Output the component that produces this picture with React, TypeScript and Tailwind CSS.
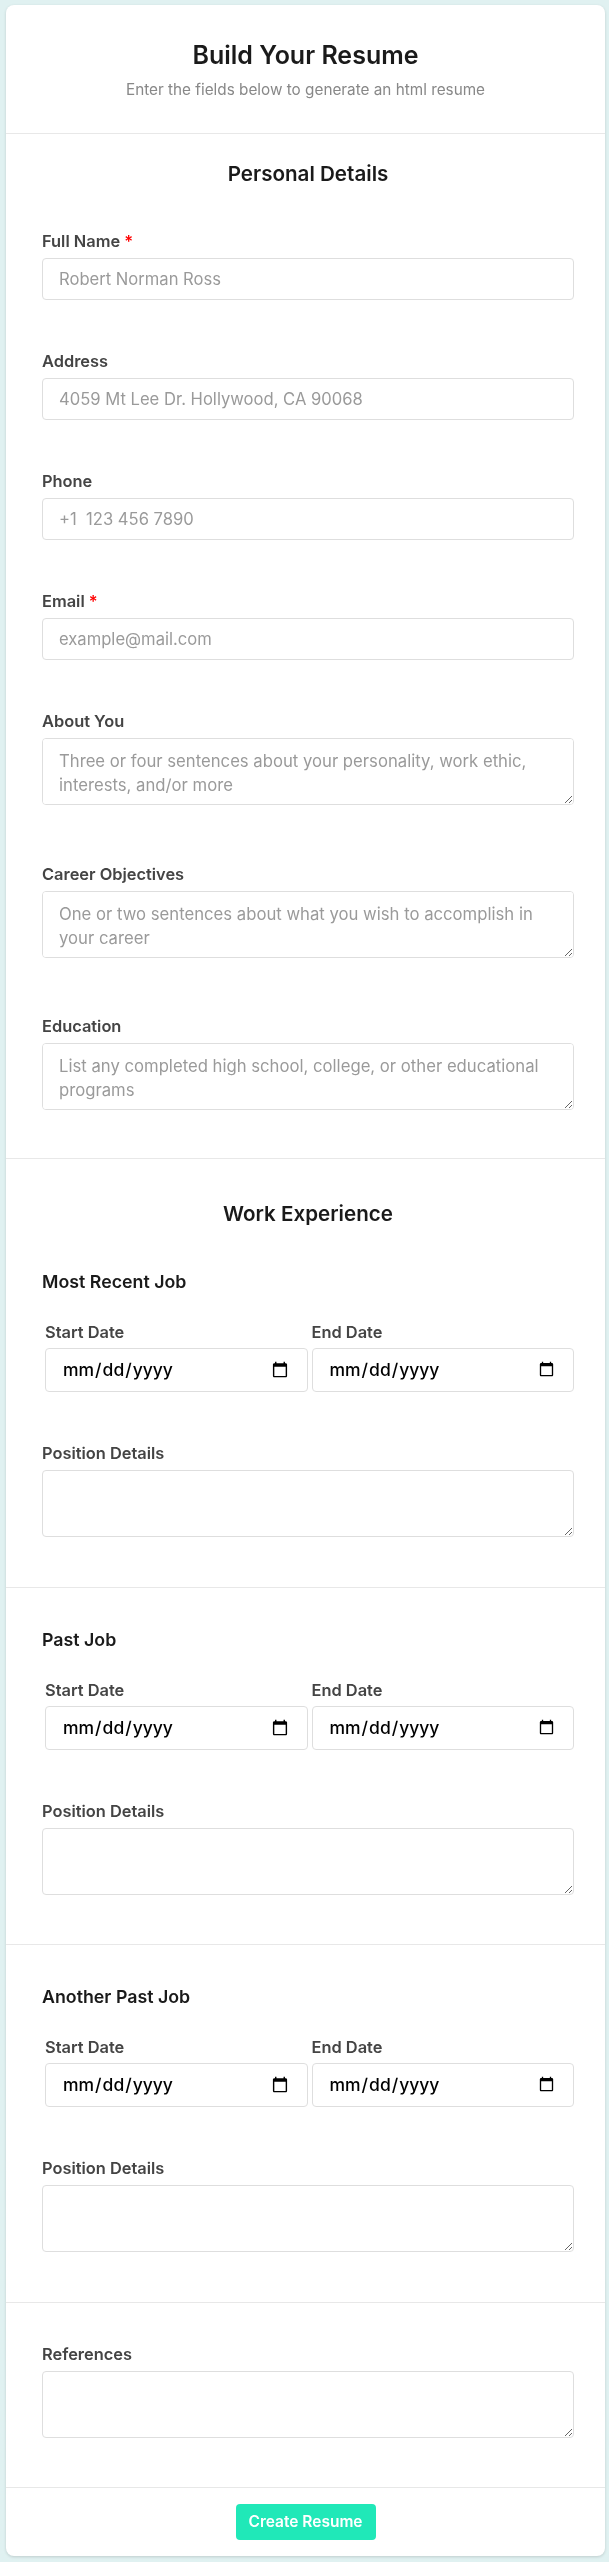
import React from "react";

function Label({ children, required }: { children: React.ReactNode; required?: boolean }) {
  return (
    <label className="block text-[16.4px] leading-[22px] font-semibold text-[#444] mb-[6px]">
      {children}
      {required && <span className="text-[#ff0000] ml-[4px]">*</span>}
    </label>
  );
}

function TextInput({ placeholder }: { placeholder: string }) {
  return (
    <input
      type="text"
      placeholder={placeholder}
      className="block w-full h-[42px] bg-white border border-[#dedede] rounded-[4px] px-[16px] text-[16.6px] text-[#333] placeholder:text-[#9a9a9a] outline-none"
    />
  );
}

function TextArea({ placeholder }: { placeholder?: string }) {
  return (
    <textarea
      placeholder={placeholder}
      className="block w-full h-[67px] bg-white border border-[#dedede] rounded-[4px] px-[16px] py-[10px] text-[16.7px] leading-[24px] text-[#333] placeholder:text-[#9a9a9a] outline-none"
    />
  );
}

function DateInput({ label }: { label: string }) {
  return (
    <div className="flex-1">
      <label className="block text-[16.4px] leading-[22px] font-semibold text-[#444] mb-[5px]">{label}</label>
      <input
        type="date"
        className="block w-full h-[44px] bg-white border border-[#dedede] rounded-[4px] px-[16px] text-[17.5px] font-medium text-black outline-none"
      />
    </div>
  );
}

function DateRow() {
  return (
    <div className="flex gap-[4px] pl-[3px] mt-[27px]">
      <DateInput label="Start Date" />
      <DateInput label="End Date" />
    </div>
  );
}

function Job({ title }: { title: string }) {
  return (
    <>
      <h3 className="text-[17.8px] leading-[24px] font-semibold text-[#1a1a1a]">{title}</h3>
      <DateRow />
      <div className="mt-[50px]">
        <Label>Position Details</Label>
        <TextArea />
      </div>
    </>
  );
}

export default function App() {
  return (
    <div className="min-h-[2562px] bg-[#e0f1f1] pt-[5px] pb-[6px] font-[Inter,'Noto_Sans',sans-serif]">
      <div className="ml-[6px] w-[599px] bg-white rounded-[8px] shadow-[0_1px_3px_rgba(0,0,0,0.15)]">
        {/* Header */}
        <div className="pt-[34px] pb-[32px] border-b border-[#e8e8e8] text-center">
          <h1 className="text-[25px] leading-[32px] font-semibold text-[#1a1a1a]">Build Your Resume</h1>
          <p className="mt-[8px] text-[15.3px] leading-[22px] text-[#888]">
            Enter the fields below to generate an html resume
          </p>
        </div>

        {/* Personal details */}
        <div className="pt-[26px] pb-[48px] pl-[36px] pr-[31px] border-b border-[#e8e8e8]">
          <h2 className="text-center text-[20.6px] leading-[28px] font-semibold text-[#1a1a1a]">Personal Details</h2>
          <div className="mt-[42px]">
            <div className="mb-[50px]">
              <Label required>Full Name</Label>
              <TextInput placeholder="Robert Norman Ross" />
            </div>
            <div className="mb-[50px]">
              <Label>Address</Label>
              <TextInput placeholder="4059 Mt Lee Dr. Hollywood, CA 90068" />
            </div>
            <div className="mb-[50px]">
              <Label>Phone</Label>
              <TextInput placeholder="+1  123 456 7890" />
            </div>
            <div className="mb-[50px]">
              <Label required>Email</Label>
              <TextInput placeholder="example@mail.com" />
            </div>
            <div className="mb-[58px]">
              <Label>About You</Label>
              <TextArea placeholder="Three or four sentences about your personality, work ethic, interests, and/or more" />
            </div>
            <div className="mb-[57px]">
              <Label>Career Objectives</Label>
              <TextArea placeholder="One or two sentences about what you wish to accomplish in your career" />
            </div>
            <div>
              <Label>Education</Label>
              <TextArea placeholder="List any completed high school, college, or other educational programs" />
            </div>
          </div>
        </div>

        {/* Work experience */}
        <div className="pt-[41px] pb-[50px] pl-[36px] pr-[31px] border-b border-[#e8e8e8]">
          <h2 className="text-center text-[20.6px] leading-[28px] font-semibold text-[#1a1a1a]">Work Experience</h2>
          <div className="mt-[42px]">
            <Job title="Most Recent Job" />
          </div>
        </div>

        <div className="pt-[40px] pb-[49px] pl-[36px] pr-[31px] border-b border-[#e8e8e8]">
          <Job title="Past Job" />
        </div>

        <div className="pt-[40px] pb-[50px] pl-[36px] pr-[31px] border-b border-[#e8e8e8]">
          <Job title="Another Past Job" />
        </div>

        {/* References */}
        <div className="pt-[40px] pb-[49px] pl-[36px] pr-[31px] border-b border-[#e8e8e8]">
          <Label>References</Label>
          <TextArea />
        </div>

        {/* Footer */}
        <div className="pt-[16px] pb-[16px] flex justify-center">
          <button className="w-[140px] h-[36px] rounded-[4px] bg-[#20e8b8] text-white text-[15.5px] font-semibold">
            Create Resume
          </button>
        </div>
      </div>
    </div>
  );
}
